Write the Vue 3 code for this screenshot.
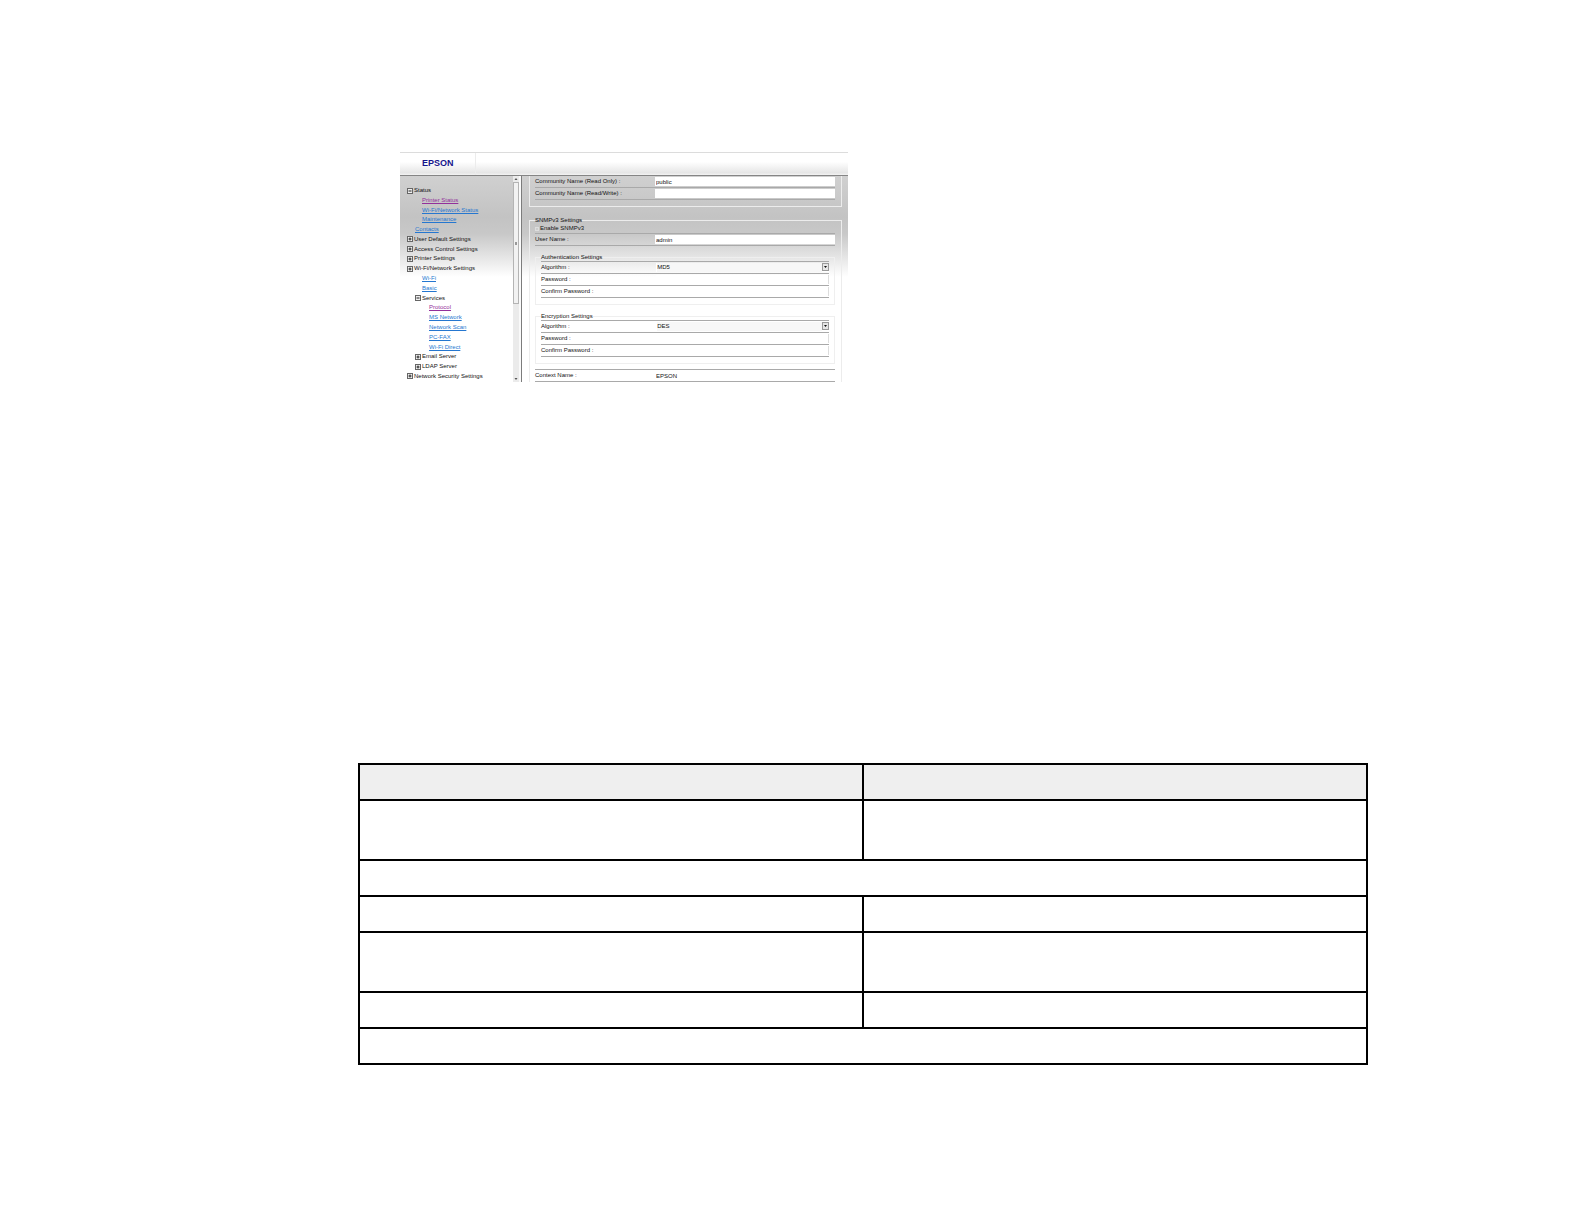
<script setup>
import { ref } from 'vue'

const tree = [
  { text: 'Status', level: 0, toggle: 'open' },
  { text: 'Printer Status', level: 2, visited: true },
  { text: 'Wi-Fi/Network Status', level: 2 },
  { text: 'Maintenance', level: 2 },
  { text: 'Contacts', level: 1 },
  { text: 'User Default Settings', level: 0, toggle: 'closed' },
  { text: 'Access Control Settings', level: 0, toggle: 'closed' },
  { text: 'Printer Settings', level: 0, toggle: 'closed' },
  { text: 'Wi-Fi/Network Settings', level: 0, toggle: 'closed' },
  { text: 'Wi-Fi', level: 2 },
  { text: 'Basic', level: 2 },
  { text: 'Services', level: 1, toggle: 'open' },
  { text: 'Protocol', level: 3, visited: true },
  { text: 'MS Network', level: 3 },
  { text: 'Network Scan', level: 3 },
  { text: 'PC-FAX', level: 3 },
  { text: 'Wi-Fi Direct', level: 3 },
  { text: 'Email Server', level: 1, toggle: 'closed' },
  { text: 'LDAP Server', level: 1, toggle: 'closed' },
  { text: 'Network Security Settings', level: 0, toggle: 'closed' }
]

const sections = [
  { id: 'auth', title: 'Authentication Settings', algorithm: 'MD5' },
  { id: 'enc', title: 'Encryption Settings', algorithm: 'DES' }
]

const readOnly = ref('public')
const readWrite = ref('')
const userName = ref('admin')
const contextName = ref('EPSON')

const tableRows = [
  { cells: 2, tall: true },
  { cells: 1 },
  { cells: 2 },
  { cells: 2, tall: true },
  { cells: 2 },
  { cells: 1 }
]
</script>

<template>
  <main class="page">
    <section class="shot">
      <header class="top"><span class="logo">EPSON</span></header>
      <div class="body">
        <nav class="side">
          <ul class="tree">
            <li v-for="n in tree" :key="n.text" :class="'l' + n.level">
              <template v-if="n.toggle">
                <button type="button" class="toggle" :aria-label="n.text">
                  <svg viewBox="0 0 6 6" width="6" height="6">
                    <rect x="0.5" y="0.5" width="5" height="5" fill="#f0f0f0" stroke="#666" />
                    <path :d="n.toggle === 'open' ? 'M1.5 3H4.5' : 'M1.5 3H4.5M3 1.5V4.5'" stroke="#222" />
                  </svg>
                </button>
                <span>{{ n.text }}</span>
              </template>
              <a v-else href="#" :class="{ visited: n.visited }">{{ n.text }}</a>
            </li>
          </ul>
        </nav>
        <div class="scroll">
          <svg viewBox="0 0 6 6" width="6" height="6"><path d="M1.5 4L3 2L4.5 4Z" fill="#555" /></svg>
          <div class="track">
            <div class="thumb"><i></i></div>
          </div>
          <svg viewBox="0 0 6 6" width="6" height="6"><path d="M1.5 2L3 4L4.5 2Z" fill="#555" /></svg>
        </div>
        <form class="content" @submit.prevent>
          <fieldset class="box community">
            <div class="row">
              <label for="ro">Community Name (Read Only) :</label>
              <input id="ro" v-model="readOnly" type="text" />
            </div>
            <div class="row last">
              <label for="rw">Community Name (Read/Write) :</label>
              <input id="rw" v-model="readWrite" type="text" />
            </div>
          </fieldset>
          <fieldset class="box snmp">
            <legend>SNMPv3 Settings</legend>
            <div class="enable">
              <input id="enable" type="checkbox" />
              <label for="enable">Enable SNMPv3</label>
            </div>
            <div class="row last">
              <label for="user">User Name :</label>
              <input id="user" v-model="userName" type="text" />
            </div>
            <fieldset v-for="s in sections" :key="s.id" class="box inner">
              <legend>{{ s.title }}</legend>
              <div class="row">
                <label :for="s.id + '-alg'">Algorithm :</label>
                <div class="pick">
                  <select :id="s.id + '-alg'">
                    <option>{{ s.algorithm }}</option>
                  </select>
                  <svg viewBox="0 0 7 9" width="7" height="9">
                    <rect x="0.5" y="0.5" width="6" height="7" fill="#e6e6e6" stroke="#9a9a9a" />
                    <path d="M2 3H5L3.5 5Z" fill="#111" />
                  </svg>
                </div>
              </div>
              <div class="row">
                <label :for="s.id + '-pw'">Password :</label>
                <input :id="s.id + '-pw'" type="password" />
              </div>
              <div class="row last">
                <label :for="s.id + '-pw2'">Confirm Password :</label>
                <input :id="s.id + '-pw2'" type="password" />
              </div>
            </fieldset>
            <div class="row context last">
              <label for="ctx">Context Name :</label>
              <input id="ctx" v-model="contextName" type="text" />
            </div>
          </fieldset>
        </form>
      </div>
    </section>

    <table class="grid">
      <thead>
        <tr><th></th><th></th></tr>
      </thead>
      <tbody>
        <tr v-for="(r, i) in tableRows" :key="i" :class="{ tall: r.tall }">
          <td v-for="c in r.cells" :key="c" :colspan="r.cells === 1 ? 2 : 1"></td>
        </tr>
      </tbody>
    </table>
  </main>
</template>

<style>
body {
  background: #fff;
}
</style>

<style scoped>
.page {
  box-sizing: border-box;
  padding: 152px 216px 159px 358px;
  font-family: "Liberation Sans", Arial, sans-serif;
  font-size: 6px;
  line-height: 7px;
  color: #111;
}
.shot {
  box-sizing: border-box;
  width: 100%;
  max-width: 448px;
  height: 230px;
  margin: 0 0 381px 42px;
  overflow: hidden;
}
.top {
  box-sizing: border-box;
  display: flex;
  height: 24px;
  border-top: 1px solid #dcdcdc;
  border-bottom: 1px solid #858585;
  background: linear-gradient(#fff 40%, #e6e6e6 90%, #f4f4f4);
}
.logo {
  box-sizing: border-box;
  width: 76px;
  padding-left: 22px;
  border-right: 1px solid #ececec;
  font-size: 9px;
  font-weight: bold;
  line-height: 21px;
  color: #17158c;
}
.body {
  display: flex;
  height: 206px;
  background: linear-gradient(#d0d0d0, #c3c3c3 20%, #c8c8c8 28%, #e4e4e4 39%, #fff 49%);
}
.side {
  flex: 0 0 113px;
}
.tree {
  box-sizing: border-box;
  display: flex;
  flex-direction: column;
  justify-content: space-between;
  height: 206px;
  margin: 0;
  padding: 10px 0 1px 7px;
  list-style: none;
}
.tree li {
  display: flex;
  align-items: center;
  gap: 1px;
  height: 9px;
  line-height: 9px;
  white-space: nowrap;
}
.l1 {
  padding-left: 8px;
}
.l2 {
  padding-left: 15px;
}
.l3 {
  padding-left: 22px;
}
.toggle {
  display: flex;
  padding: 0;
  border: 0;
  background: none;
}
a {
  color: #2577d0;
}
a.visited {
  color: #93309c;
}
.scroll {
  box-sizing: border-box;
  display: flex;
  flex: 0 0 9px;
  flex-direction: column;
  align-items: flex-start;
  border-right: 1px solid #7c7c7c;
  background: linear-gradient(90deg, #ebebeb 6px, #fafafa 6px);
}
.track {
  flex: 1;
  width: 6px;
}
.thumb {
  box-sizing: border-box;
  display: flex;
  align-items: center;
  justify-content: center;
  height: 63%;
  border: 1px solid #b4b4b4;
  background: #f2f2f2;
}
.thumb i {
  width: 2px;
  height: 3px;
  background: #999;
}
.content {
  flex: 1;
  min-width: 0;
  padding: 0 6px 0 7px;
}
.box {
  min-width: 0;
  margin: 0;
  padding: 0 6px 6px 5px;
  border: 1px solid #ececec;
}
.community {
  border-top: 0;
}
.community .row:first-child {
  border-top: 0;
}
.snmp {
  margin-top: 10px;
}
.inner {
  margin-top: 8px;
  padding-right: 5px;
  border-color: #efefef;
}
legend {
  height: 7px;
  padding: 0;
}
.enable {
  display: flex;
  align-items: center;
  gap: 1px;
  height: 9px;
}
.enable input {
  width: 4px;
  height: 4px;
  margin: 0;
  border: 1px solid #ddd;
  background: #ccc;
  appearance: none;
}
.row {
  display: flex;
  align-items: center;
  height: 11px;
  border-top: 1px solid #a9a9a9;
}
.row.last {
  border-bottom: 1px solid #a9a9a9;
}
.row label {
  flex: 0 0 40%;
  white-space: nowrap;
}
.row input,
.pick {
  box-sizing: border-box;
  flex: 1;
  min-width: 0;
  height: 9px;
  padding: 0 0 0 1px;
  border: 0;
  background: #fff;
  font: inherit;
  color: #111;
}
.inner input {
  border-right: 1px solid #ddd;
}
.pick {
  display: flex;
}
.pick select {
  flex: 1;
  min-width: 0;
  height: 9px;
  padding: 0;
  border: 0;
  background: #f7f7f7;
  font: inherit;
  line-height: 9px;
  color: #111;
  appearance: none;
}
.context {
  margin-top: 5px;
}
.grid {
  width: 100%;
  border-collapse: collapse;
  table-layout: fixed;
}
.grid th,
.grid td {
  box-sizing: border-box;
  height: 36px;
  padding: 0;
  border: 2px solid #000;
}
.grid th {
  background: #efefef;
}
.grid .tall td {
  height: 60px;
}
</style>
